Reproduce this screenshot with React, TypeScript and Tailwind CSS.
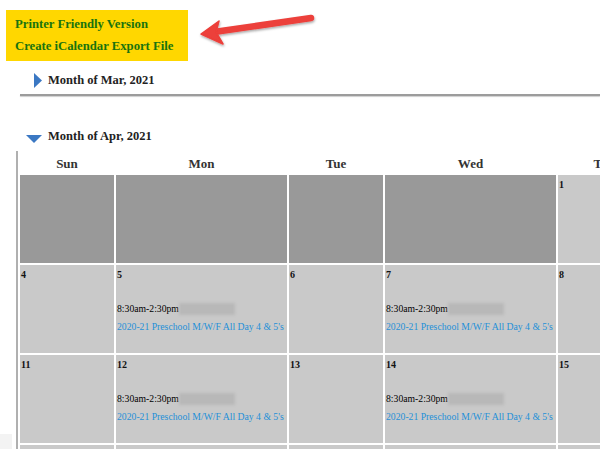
import React from 'react';

type Cell = { day?: number; dark?: boolean; event?: boolean };

const days = ['Sun', 'Mon', 'Tue', 'Wed', 'Thu'];

const weeks: Cell[][] = [
  [{ dark: true }, { dark: true }, { dark: true }, { dark: true }, { day: 1 }],
  [{ day: 4 }, { day: 5, event: true }, { day: 6 }, { day: 7, event: true }, { day: 8 }],
  [{ day: 11 }, { day: 12, event: true }, { day: 13 }, { day: 14, event: true }, { day: 15 }],
  [{}, {}, {}, {}, {}],
];

function DayCell({ cell }: { cell: Cell }) {
  if (cell.dark) return <div className="h-[88px] bg-[#999999]" />;
  return (
    <div className="h-[88px] bg-[#c9c9c9] pl-[1px] flex flex-col overflow-hidden">
      <div className="h-[20px] leading-[20px] text-[10px] font-bold text-[#111]">{cell.day}</div>
      {cell.event && (
        <div className="mt-[15px] text-[9.7px] whitespace-nowrap">
          <div className="h-[18px] leading-[18px] flex items-center text-black">
            8:30am-2:30pm
            <span className="inline-block w-[56px] h-[12px] bg-[#b8b8b8] blur-[1.5px]" />
          </div>
          <div className="h-[18px] leading-[18px] text-[#1f90d8]">2020-21 Preschool M/W/F All Day 4 &amp; 5's</div>
        </div>
      )}
    </div>
  );
}

function MonthHeading({ label, open }: { label: string; open?: boolean }) {
  return (
    <div className="flex items-center h-[16px]">
      {open ? (
        <svg width="16" height="8" viewBox="0 0 16 8" className="ml-[26px] mr-[6px] mt-[6px]">
          <polygon points="0,0 16,0 8,8" fill="#3b78c3" />
        </svg>
      ) : (
        <svg width="8" height="15" viewBox="0 0 8 15" className="ml-[34px] mr-[6px]">
          <polygon points="0,0 8,7.5 0,15" fill="#3b78c3" />
        </svg>
      )}
      <span className="text-[12.5px] font-bold text-[#222] leading-[16px]">{label}</span>
    </div>
  );
}

export default function App() {
  return (
    <div className="relative w-[600px] h-[449px] overflow-hidden bg-white font-['Liberation_Serif',serif]">
      {/* export links */}
      <div className="ml-[6px] mt-[10px] w-[182px] h-[51px] bg-[#ffd700] pl-[9px] pt-[3px] text-[12.7px] font-bold text-[#19730f]">
        <div className="leading-[22px]">Printer Friendly Version</div>
        <div className="leading-[22px]">Create iCalendar Export File</div>
      </div>

      {/* red annotation arrow */}
      <svg className="absolute left-0 top-0" width="340" height="60" viewBox="0 0 340 60">
        <defs>
          <filter id="sh" x="-10%" y="-50%" width="120%" height="200%">
            <feDropShadow dx="0.5" dy="1.5" stdDeviation="1.2" floodColor="#000" floodOpacity="0.35" />
          </filter>
        </defs>
        <g filter="url(#sh)" fill="#ec3f3a" stroke="#ec3f3a">
          <line x1="311" y1="18" x2="214" y2="32" strokeWidth="6.5" strokeLinecap="round" />
          <polygon points="201,34 219,21 216,32 223,44" strokeWidth="1.5" strokeLinejoin="round" />
        </g>
      </svg>

      <div className="mt-[11px]">
        <MonthHeading label="Month of Mar, 2021" />
      </div>
      <div className="ml-[20px] mt-[6px] h-[2px] bg-[#9c9c9c] shadow-[0_1px_1px_#cfcfcf]" />

      <div className="mt-[32px]">
        <MonthHeading label="Month of Apr, 2021" open />
      </div>

      <div className="ml-[16px] mt-[7px] border-l-2 border-[#b0b0b0] pl-[2px] pt-[2px]">
        <div className="grid grid-cols-[94px_171px_94px_171px_94px] gap-[2px]">
          {days.map(d => (
            <div key={d} className="h-[20px] pt-[1px] leading-[20px] text-center text-[13px] font-bold text-[#333]">
              {d}
            </div>
          ))}
          {weeks.map((week, i) =>
            week.map((cell, j) => <DayCell key={`${i}-${j}`} cell={cell} />)
          )}
        </div>
      </div>

      <div className="absolute left-0 top-[434px] w-[12px] h-[15px] bg-[#f3f3f3]" />
    </div>
  );
}
